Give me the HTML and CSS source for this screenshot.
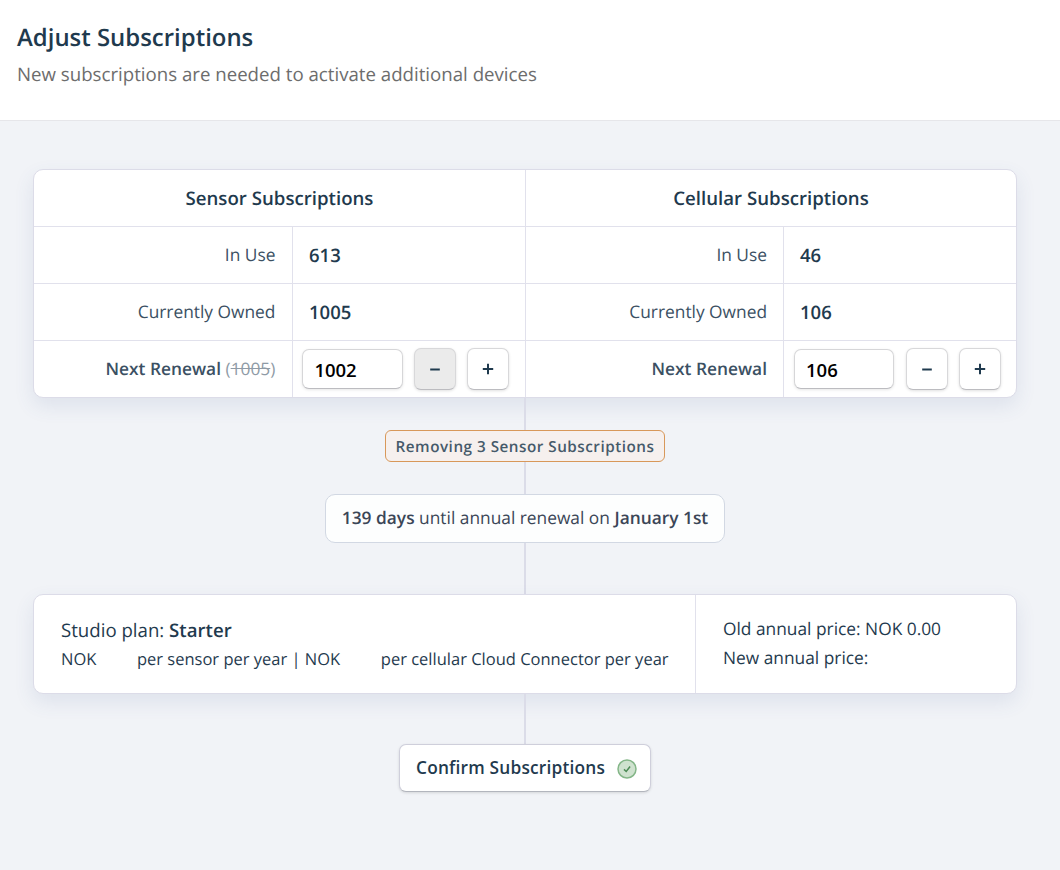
FILE: index.html
```html
<!DOCTYPE html>
<html lang="en">
<head>
    <meta charset="UTF-8">
    <meta name="viewport" content="width=device-width, initial-scale=1.0">
    <title>Adjust Subscriptions</title>
    <link rel="stylesheet" href="styles.css">
</head>
<body>
    <header class="page-header">
        <h1>Adjust Subscriptions</h1>
        <p>New subscriptions are needed to activate additional devices</p>
    </header>

    <main class="content">
        <!-- Subscription counts -->
        <section class="card counts">
            <div class="column">
                <h2>Sensor Subscriptions</h2>
                <div class="row">
                    <div class="label">In Use</div>
                    <div class="value">613</div>
                </div>
                <div class="row">
                    <div class="label">Currently Owned</div>
                    <div class="value">1005</div>
                </div>
                <div class="row">
                    <div class="label"><b>Next Renewal</b>&nbsp;<span class="previous">(<s>1005</s>)</span></div>
                    <div class="value stepper">
                        <input class="amount" type="text" value="1002">
                        <button class="step pressed"><svg width="12" height="12" viewBox="0 0 12 12"><path d="M1.2 6.5h9.6"/></svg></button>
                        <button class="step"><svg width="12" height="12" viewBox="0 0 12 12"><path d="M.8 6h10.4M6 .8v10.4"/></svg></button>
                    </div>
                </div>
            </div>
            <div class="column">
                <h2>Cellular Subscriptions</h2>
                <div class="row">
                    <div class="label">In Use</div>
                    <div class="value">46</div>
                </div>
                <div class="row">
                    <div class="label">Currently Owned</div>
                    <div class="value">106</div>
                </div>
                <div class="row">
                    <div class="label"><b>Next Renewal</b></div>
                    <div class="value stepper">
                        <input class="amount" type="text" value="106">
                        <button class="step"><svg width="12" height="12" viewBox="0 0 12 12"><path d="M1.2 6.5h9.6"/></svg></button>
                        <button class="step"><svg width="12" height="12" viewBox="0 0 12 12"><path d="M.8 6h10.4M6 .8v10.4"/></svg></button>
                    </div>
                </div>
            </div>
        </section>

        <div class="connector"></div>
        <div class="change">Removing 3 Sensor Subscriptions</div>
        <div class="connector"></div>
        <div class="renewal"><b>139 days</b> until annual renewal on <b>January 1st</b></div>
        <div class="connector connector-long"></div>

        <!-- Plan and price -->
        <section class="card summary">
            <div class="plan">
                <p class="plan-name">Studio plan: <b>Starter</b></p>
                <p class="plan-price">NOK <span class="price"></span> per sensor per year | NOK <span class="price"></span> per cellular Cloud Connector per year</p>
            </div>
            <div class="totals">
                <p>Old annual price: NOK 0.00</p>
                <p>New annual price:</p>
            </div>
        </section>

        <div class="connector connector-last"></div>
        <button class="confirm">
            <span>Confirm Subscriptions</span>
            <svg width="20" height="20" viewBox="0 0 20 20">
                <circle cx="10" cy="10" r="9"/>
                <path d="M7 10.4l2.2 2.1 3.9-5"/>
            </svg>
        </button>
    </main>
</body>
</html>
```
FILE: styles.css
```css
* {
    box-sizing: border-box;
}
body {
    margin: 0;
    min-height: 870px;
    background: #f1f3f7;
    font-family: 'Open Sans', 'Noto Sans', sans-serif;
    color: #1f3a4e;
    text-rendering: geometricPrecision;
}
h1, h2, p {
    margin: 0;
}
b {
    font-weight: 600;
}
.page-header {
    height: 121px;
    padding: 21px 17px 0;
    background: #fff;
    border-bottom: 1px solid #e6e6ea;
}
.page-header h1 {
    font-size: 23.95px;
    font-weight: 600;
    line-height: 34px;
}
.page-header p {
    margin-top: 6px;
    font-size: 18.66px;
    line-height: 28px;
    color: #6d6d6d;
}
.content {
    display: flex;
    flex-direction: column;
    align-items: center;
    width: 984px;
    margin: 48px 0 0 33px;
}
.card {
    display: flex;
    width: 984px;
    background: #fff;
    border: 1px solid #dcdce8;
    border-radius: 10px;
    box-shadow: 0 8px 20px rgba(60, 90, 150, 0.11);
}
.column {
    width: 490px;
}
.column:first-child {
    width: 492px;
    border-right: 1px solid #e1e1ec;
}
.column h2 {
    height: 56px;
    font-size: 18.65px;
    font-weight: 600;
    line-height: 57px;
    text-align: center;
}
.row {
    display: flex;
    height: 57px;
    border-top: 1px solid #e1e1ec;
}
.label {
    display: flex;
    align-items: center;
    justify-content: flex-end;
    width: 258px;
    padding-right: 16px;
    border-right: 1px solid #e1e1ec;
    font-size: 17.33px;
    color: #3b5063;
}
.column:first-child .label {
    width: 259px;
    padding-right: 16.6px;
}
.previous {
    color: #8f9ba6;
}
.value {
    display: flex;
    align-items: center;
    padding-left: 16px;
    font-size: 18.5px;
    font-weight: 600;
}
.stepper {
    gap: 11.5px;
    padding-left: 10px;
}
.column:first-child .stepper {
    padding-left: 9.4px;
}
.amount {
    width: 100.3px;
    height: 40px;
    padding: 0 11px;
    border: 1px solid #d6d6d8;
    border-bottom-color: #bcbcc0;
    border-radius: 7px;
    box-shadow: 0 1px 3px rgba(0, 0, 0, 0.1);
    font: 600 18.5px 'Open Sans', 'Noto Sans', sans-serif;
    color: #000;
}
.step {
    display: flex;
    align-items: center;
    justify-content: center;
    width: 41.8px;
    height: 42px;
    padding: 0;
    background: #fff;
    border: 1px solid #d8d8da;
    border-bottom-color: #bcbcc0;
    border-radius: 7px;
    box-shadow: 0 1px 3px rgba(0, 0, 0, 0.12);
}
.step.pressed {
    background: #ebebeb;
}
.step svg {
    fill: none;
    stroke: #1f3a4e;
    stroke-width: 2;
}
.connector {
    width: 2px;
    height: 32px;
    background: #dbdce8;
}
.connector-long {
    height: 51px;
}
.connector-last {
    height: 50px;
}
.change {
    width: 280px;
    height: 32px;
    border: 1px solid #d8985a;
    border-radius: 6px;
    background: #f6f0ee;
    font-size: 15.25px;
    font-weight: 600;
    line-height: 32px;
    letter-spacing: 0.5px;
    text-align: center;
    white-space: nowrap;
    color: #465a6a;
}
.renewal {
    width: 400px;
    height: 49px;
    border: 1px solid #d2d8e3;
    border-radius: 10px;
    background: #fdfefe;
    font-size: 17.33px;
    line-height: 46px;
    text-align: center;
    white-space: nowrap;
    color: #3b4657;
}
.summary {
    height: 100px;
}
.plan {
    width: 662px;
    padding: 21px 0 0 27px;
    border-right: 1px solid #e1e1ec;
    white-space: nowrap;
}
.plan-name {
    font-size: 18.65px;
    line-height: 29px;
}
.plan-price {
    font-size: 16.5px;
    line-height: 27px;
}
.price {
    display: inline-block;
    width: 32px;
}
.totals {
    padding: 20px 0 0 27px;
    font-size: 17.33px;
    line-height: 29px;
}
.confirm {
    display: flex;
    align-items: center;
    justify-content: space-between;
    width: 252px;
    height: 48px;
    padding: 0 13px 1px 16px;
    background: #fff;
    border: 1px solid #cfcfdb;
    border-bottom-color: #b2b5bd;
    border-radius: 7px;
    box-shadow: 0 1px 3px rgba(0, 0, 0, 0.12);
    font: 600 17.3px 'Open Sans', 'Noto Sans', sans-serif;
    letter-spacing: 0.2px;
    white-space: nowrap;
    color: #1f3a4e;
}
.confirm svg {
    margin-top: 2px;
    fill: none;
    stroke: #4d8a56;
    stroke-width: 1.5;
}
.confirm circle {
    fill: #cfe2cf;
    stroke: #84b688;
}
```
